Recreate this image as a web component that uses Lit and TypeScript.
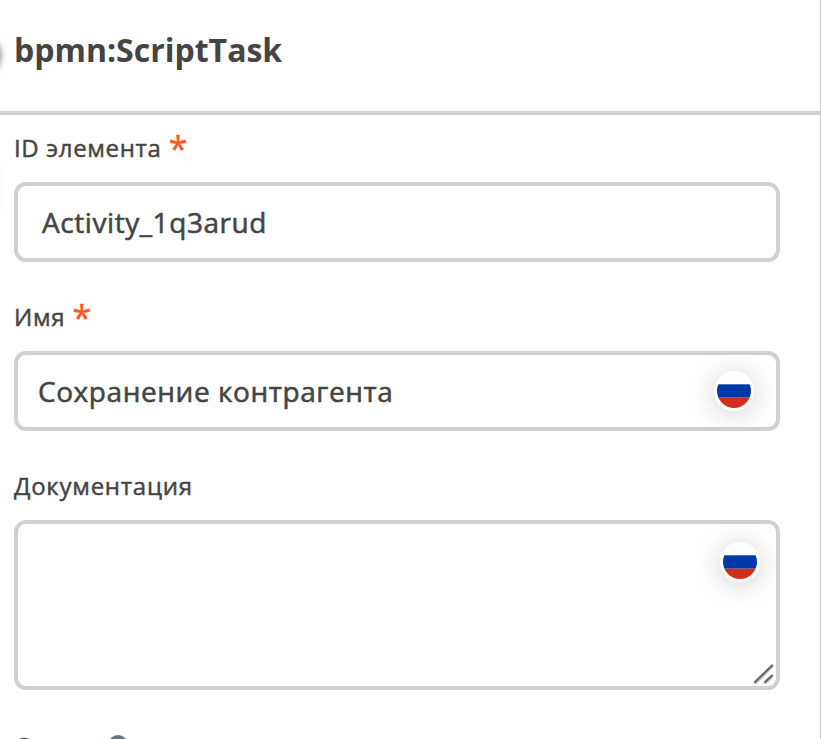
import { LitElement, html, css } from "lit";
import { customElement, property } from "lit/decorators.js";

@customElement("flag-badge")
class FlagBadge extends LitElement {
  static styles = css`
    :host { display: block; width: 40px; height: 40px; border-radius: 50%; background: #fff; box-shadow: 0 3px 28px rgba(0, 0, 0, 0.2); }
    svg { display: block; }
  `;
  render() {
    return html`<svg width="40" height="40" viewBox="0 0 40 40">
      <defs><clipPath id="c"><circle cx="20" cy="20" r="17" /></clipPath></defs>
      <g clip-path="url(#c)">
        <rect width="40" height="40" fill="#fff" />
        <rect y="13.3" width="40" height="13.4" fill="#0039a6" />
        <rect y="26.7" width="40" height="14" fill="#d52b1e" />
      </g>
    </svg>`;
  }
}

@customElement("form-field")
class FormField extends LitElement {
  @property() label = "";
  @property({ type: Boolean }) required = false;
  static styles = css`
    :host { display: block; }
    .label { display: flex; height: 33px; line-height: 33px; margin-bottom: 18px; font-size: 24px; letter-spacing: 0.65px; -webkit-text-stroke: 0.45px currentColor; white-space: pre; }
    .wide { letter-spacing: 0.75px; }
    .star { color: #ff5722; font-size: 34px; margin-left: 7.3px; line-height: 34px; letter-spacing: 0; -webkit-text-stroke: 0.4px currentColor; }
  `;
  render() {
    return html`<div class="label ${this.required ? "" : "wide"}"><span>${this.label}</span>${this.required ? html`<span class="star">*</span>` : ""}</div><slot></slot>`;
  }
}

@customElement("app-root")
class AppRoot extends LitElement {
  static styles = css`
    :host { display: block; position: relative; box-sizing: border-box; width: 821px; height: 739px; overflow: hidden; background: #fff; color: #444; border-right: 1px solid #cfcfcf; font-family: "Open Sans", "Noto Sans", sans-serif; }
    header { box-sizing: border-box; height: 115px; padding: 28px 0 0 14px; border-bottom: 4px solid #d0d0d0; }
    h1 { margin: 0; font-size: 32px; line-height: 43px; font-weight: 700; }
    main { display: flex; flex-direction: column; gap: 38px; padding: 16px 40px 0 14px; }
    .box { box-sizing: border-box; height: 80px; border: 4px solid #d0d0d0; border-radius: 12px; display: flex; align-items: center; justify-content: space-between; font-size: 28px; letter-spacing: 0.57px; -webkit-text-stroke: 0.55px currentColor; padding: 0 22px 0 20px; overflow: hidden; }
    .id { padding-left: 24px; }
    .area { height: 170px; align-items: flex-start; justify-content: flex-end; padding: 18px 16px 0 0; position: relative; }
    .grip { position: absolute; right: 0; bottom: 0; }
    .last { display: flex; align-items: center; gap: 7px; height: 34px; font-size: 24px; letter-spacing: 0.6px; -webkit-text-stroke: 0.45px currentColor; }
    .last svg { display: block; -webkit-text-stroke: 0; letter-spacing: 0; }
    .knob { position: absolute; left: -40px; top: 33px; width: 40px; height: 40px; border-radius: 50%; box-shadow: 0 2px 7px rgba(0, 0, 0, 0.6); }
    .edge { position: absolute; left: -20px; top: 166px; width: 20px; height: 44px; box-shadow: 0 0 6px rgba(0, 0, 0, 0.06); }
  `;
  render() {
    return html`
      <div class="knob"></div>
      <div class="edge"></div>
      <header><h1>bpmn:ScriptTask</h1></header>
      <main>
        <form-field label="ID элемента" required><div class="box id">Activity_1q3arud</div></form-field>
        <form-field label="Имя" required><div class="box"><span>Сохранение контрагента</span><flag-badge></flag-badge></div></form-field>
        <form-field label="Документация">
          <div class="box area">
            <flag-badge></flag-badge>
            <svg class="grip" width="24" height="24" viewBox="0 0 24 24" fill="none" stroke-linecap="round">
              <path d="M4 21 20.5 4.5M14 21 20.5 14.5" stroke="#c4c4c4" stroke-width="2.4" />
              <path d="M3 20 20 3.5M13 20 20 13.5" stroke="#666" stroke-width="2.2" />
            </svg>
          </div>
        </form-field>
        <div class="last">
          <span>Скрипт</span>
          <svg width="20" height="20" viewBox="0 0 20 20"><circle cx="10" cy="10" r="10" fill="#6b7280" /><text x="10" y="15" text-anchor="middle" font-size="14" font-weight="700" fill="#fff">?</text></svg>
        </div>
      </main>
    `;
  }
}
